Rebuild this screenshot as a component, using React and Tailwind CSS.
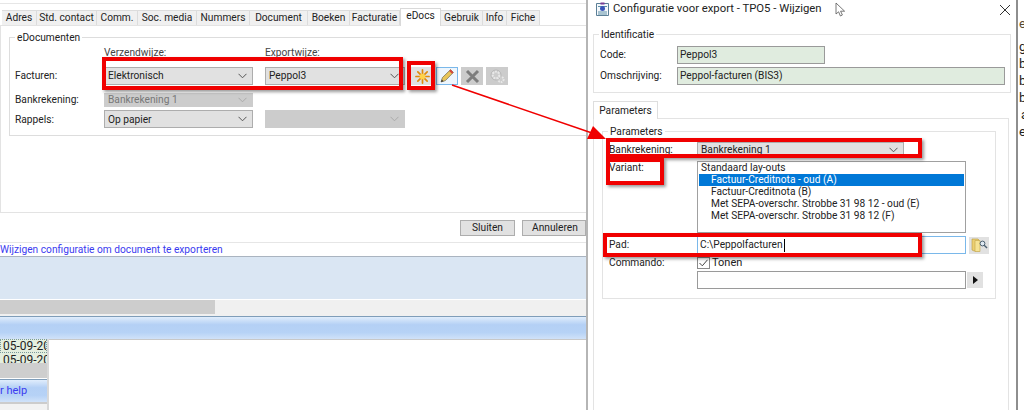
import React from "react";

const RED = "pointer-events-none absolute border-[4px] border-[#f00000] shadow-[2px_2px_3px_rgba(0,0,0,0.4)]";

function Chevron({ color = "#555" }) {
  return (
    <svg width="9" height="6" viewBox="0 0 9 6" className="shrink-0">
      <path d="M0.5 0.8 4.5 4.8 8.5 0.8" fill="none" stroke={color} strokeWidth="1" />
    </svg>
  );
}

function Select({ value, className = "", disabled = false }) {
  return (
    <div
      className={`flex items-center justify-between pl-[3px] pr-[5px] border ${
        disabled ? "bg-[#cccccc] border-[#cccccc] text-[#777]" : "bg-[#e1e1e1] border-[#adadad]"
      } ${className}`}
    >
      <span>{value}</span>
      <Chevron color={disabled ? "#aaa" : "#555"} />
    </div>
  );
}

function Tab({ label, w, active = false }) {
  return active ? (
    <div className="relative z-10 -mt-[2px] -mb-[1px] flex h-[18px] items-center justify-center border-x border-t border-[#d9d9d9] bg-white pb-[3px]" style={{ width: w }}>
      {label}
    </div>
  ) : (
    <div className="flex h-[15px] items-center justify-center border-r border-t border-[#dcdcdc] bg-[#f0f0f0]" style={{ width: w }}>
      {label}
    </div>
  );
}

function IconBtn({ children, className = "" }) {
  return <div className={`flex h-[18px] w-[22px] items-center justify-center ${className}`}>{children}</div>;
}

function Star() {
  return (
    <svg width="15" height="15" viewBox="0 0 16 16">
      <g stroke="#e08a0c" strokeWidth="1.8" strokeLinecap="round">
        <path d="M8 1v14M1 8h14M3 3l10 10M13 3 3 13" />
      </g>
      <circle cx="8" cy="8" r="3" fill="#ffd24a" />
    </svg>
  );
}

function Pencil() {
  return (
    <svg width="16" height="16" viewBox="0 0 16 16">
      <path d="M2 14 3.4 9.6 11.6 1.6 14.4 4.4 6.4 12.6Z" fill="#e9c65a" stroke="#6f6a55" strokeWidth="0.7" />
      <path d="M11.6 1.6 14.4 4.4 13 5.8 10.2 3Z" fill="#d9443a" />
      <path d="M2 14 2.8 11.4 4.6 13.2Z" fill="#333" />
    </svg>
  );
}

function GrayX() {
  return (
    <svg width="15" height="15" viewBox="0 0 15 15">
      <path d="M2 2 13 13M13 2 2 13" stroke="#7d7d7d" strokeWidth="3" />
    </svg>
  );
}

function Gears() {
  return (
    <svg width="17" height="15" viewBox="0 0 17 15">
      <circle cx="7" cy="6" r="3.5" fill="none" stroke="#e8e8e8" strokeWidth="2.4" strokeDasharray="2 1" />
      <circle cx="12" cy="10.5" r="2.6" fill="none" stroke="#e8e8e8" strokeWidth="2" strokeDasharray="1.6 1" />
      <circle cx="7" cy="6" r="5" fill="none" stroke="#a0a0a0" strokeWidth="0.5" />
    </svg>
  );
}

function Folder() {
  return (
    <svg width="17" height="16" viewBox="0 0 17 16">
      <path d="M1 2h6l1 1v11H3l-2-1Z" fill="#eccf72" stroke="#b89a3e" strokeWidth="0.6" />
      <path d="M4 3.5h5v11H4Z" fill="#f6e394" stroke="#c2a548" strokeWidth="0.6" />
      <circle cx="11.5" cy="6.5" r="2.4" fill="#dfe9f2" stroke="#4b5f70" strokeWidth="1" />
      <path d="M13.2 8.2 16 11" stroke="#4b5f70" strokeWidth="1.4" />
    </svg>
  );
}

function DocIcon() {
  return (
    <svg width="15" height="15" viewBox="0 0 15 15" className="shrink-0">
      <path d="M1.5 1.5h12v12h-12Z" fill="#f5f8fb" stroke="#5b7f97" />
      <path d="M3 4.5h9M3 10h9M3 12h9" stroke="#5d8fa6" />
      <circle cx="7.5" cy="6.5" r="2.5" fill="#3a55b8" />
      <path d="M5.5 1.5h4" stroke="#7a3c94" strokeWidth="2" />
    </svg>
  );
}

function Cursor() {
  return (
    <svg width="11" height="15" viewBox="0 0 11 15" className="shrink-0">
      <path d="M1 1v11l2.6-2.2L5.4 14l2-1-1.8-3.8H9.6Z" fill="#fff" stroke="#555" strokeWidth="0.8" />
    </svg>
  );
}

function LeftWindow() {
  return (
    <div className="flex w-[586px] shrink-0 flex-col overflow-hidden bg-white">
      <div className="h-[4px] shrink-0 border-b border-[#e6e6e6]" />
      <div className="h-[6px] shrink-0" />
      <div className="flex h-[15px] shrink-0 pl-[2px]">
        <Tab label="Adres" w={35} />
        <Tab label="Std. contact" w={60} />
        <Tab label="Comm." w={41} />
        <Tab label="Soc. media" w={59} />
        <Tab label="Nummers" w={53} />
        <Tab label="Document" w={58} />
        <Tab label="Boeken" w={42} />
        <Tab label="Facturatie" w={50} />
        <Tab label="eDocs" w={41} active />
        <Tab label="Gebruik" w={42} />
        <Tab label="Info" w={24} />
        <Tab label="Fiche" w={33} />
      </div>
      <div className="h-[188px] shrink-0 border-y border-l border-[#e3e3e3] pt-[11px] pl-[8px]">
        <div className="h-[99px] w-[600px] border border-[#dddddd]">
          <div className="-mt-[7px] ml-[5px] w-fit bg-white px-[2px] leading-[13px]">eDocumenten</div>
          <div className="ml-[94px] mt-[2px] flex h-[13px] leading-[13px] text-[#444]">
            <span className="w-[161px]">Verzendwijze:</span>
            <span>Exportwijze:</span>
          </div>
          <div className="mt-[8px] flex items-center pl-[5px]">
            <span className="w-[89px]">Facturen:</span>
            <Select value="Elektronisch" className="h-[18px] w-[149px]" />
            <Select value="Peppol3" className="ml-[12px] h-[18px] w-[140px]" />
            <div className="ml-[6px] flex gap-[3px]">
              <IconBtn className="w-[20px] bg-[#e1e1e1]"><Star /></IconBtn>
              <IconBtn className="w-[20px] border border-[#7ab8ea] bg-[#eef6fd]"><Pencil /></IconBtn>
              <IconBtn className="bg-[#cccccc]"><GrayX /></IconBtn>
              <IconBtn className="bg-[#cccccc]"><Gears /></IconBtn>
            </div>
          </div>
          <div className="mt-[7px] flex items-center pl-[5px]">
            <span className="w-[89px]">Bankrekening:</span>
            <Select value="Bankrekening 1" className="h-[14px] w-[149px]" disabled />
          </div>
          <div className="mt-[3px] flex items-center pl-[5px]">
            <span className="w-[89px]">Rappels:</span>
            <Select value="Op papier" className="h-[18px] w-[149px]" />
            <Select value="" className="ml-[12px] h-[18px] w-[140px]" disabled />
          </div>
        </div>
      </div>
      <div className="flex h-[29px] shrink-0 items-center gap-[7px] pl-[460px]">
        <div className="flex h-[16px] w-[64px] items-center justify-center border border-[#adadad] bg-[#e1e1e1]">Sluiten</div>
        <div className="flex h-[16px] w-[64px] shrink-0 items-center pl-[9px] border border-[#adadad] bg-[#e1e1e1]">Annuleren</div>
      </div>
      <div className="h-[14px] shrink-0 border-t border-[#e6e6e6] leading-[13px] text-[#3b3bf0]">Wijzigen configuratie om document te exporteren</div>
      <div className="h-[43px] shrink-0 border-t border-[#aab4c0] bg-[#dae6f3]" />
      <div className="flex h-[17px] shrink-0 border-t border-white bg-[#f0f0f0]">
        <div className="h-[14px] w-[215px] bg-[#cdcdcd]" />
      </div>
      <div className="h-[23px] shrink-0 border-t border-[#7f9db9] bg-[linear-gradient(#e0edfc,#b4d0f5_35%,#b6d2f6_70%,#d0e2f9)] shadow-[0_1px_0_#c8c8c8]" />
      <div className="flex flex-1 flex-col w-[49px] border-r-2 border-[#d8d8d8]">
        <div className="flex h-[14px] items-center overflow-hidden border border-dotted border-[#7a9a9a] bg-[#e4efdf] text-[12px] whitespace-nowrap pl-[2px]">05-09-20</div>
        <div className="flex h-[10px] items-start overflow-hidden bg-[#e4efdf] pl-[3px] text-[12px] leading-[14px] whitespace-nowrap">05-09-20</div>
        <div className="h-[15px] bg-[#cecece]" />
        <div className="mt-[1px] flex h-[23px] items-center border-t border-[#7f9db9] bg-[linear-gradient(#e0edfc,#b4d0f5_35%,#b6d2f6_70%,#d0e2f9)] text-[11px] text-[#3b3bf0]">r help</div>
        <div className="flex-1 border-t-2 border-[#cccccc] bg-[#f2f2f2]" />
      </div>
    </div>
  );
}

function Group({ title, className = "", children }) {
  return (
    <div className={`border border-[#e3e3e3] ${className}`}>
      <div className="-mt-[7px] ml-[5px] w-fit bg-white px-[2px] leading-[13px]">{title}</div>
      {children}
    </div>
  );
}

function RightWindow() {
  return (
    <div className="relative flex w-[432px] shrink-0 flex-col border-x-2 border-x-[#b5b5b5] bg-white pl-[5px] border-r-[#8e8e8e]">
      <div className="-ml-[5px] flex h-[18px] shrink-0 items-center pl-[7px] pt-[1px] whitespace-nowrap">
        <DocIcon />
        <span className="ml-[3px] w-[213px] text-[11.3px]">Configuratie voor export - TPO5 - Wijzigen</span>
        <span className="ml-[9px]"><Cursor /></span>
        <svg width="12" height="10" viewBox="0 0 12 10" className="ml-[153px] shrink-0">
          <path d="M1 0 11 10M11 0 1 10" stroke="#333" strokeWidth="1" />
        </svg>
      </div>
      <div className="h-[16px] shrink-0" />
      <Group title="Identificatie" className="h-[59px] w-[418px] shrink-0">
        <div className="mt-[5px] flex items-center pl-[6px]">
          <span className="w-[77px]">Code:</span>
          <div className="flex h-[18px] w-[148px] items-center border border-[#9a9a9a] bg-[#e0ecdf] pl-[2px]">Peppol3</div>
        </div>
        <div className="mt-[3px] flex items-center pl-[6px]">
          <span className="w-[77px]">Omschrijving:</span>
          <div className="flex h-[18px] w-[328px] items-center border border-[#9a9a9a] bg-[#e0ecdf] pl-[2px]">Peppol-facturen (BIS3)</div>
        </div>
      </Group>
      <div className="h-[8px] shrink-0" />
      <div className="relative z-10 -mb-[1px] flex h-[18px] w-[65px] shrink-0 items-center justify-center border-x border-t border-[#dedede] bg-white">
        Parameters
      </div>
      <div className="flex-1 w-[416px] border-x border-t border-[#e3e3e3] pt-[12px] pl-[8px]">
        <Group title="Parameters" className="h-[168px] w-[394px]">
          <div className="mt-[4px] flex items-center pl-[6px]">
            <span className="w-[88px]">Bankrekening:</span>
            <Select value="Bankrekening 1" className="h-[16px] w-[207px]" />
          </div>
          <div className="mt-[3px] flex items-start pl-[6px]">
            <span className="w-[88px] leading-[13px]">Variant:</span>
            <div className="h-[72px] w-[269px] border border-[#a0a0a0] px-[1px] leading-[12px]">
              <div className="pl-[2px]">Standaard lay-outs</div>
              <div className="bg-[#0078d7] pl-[12px] text-white">Factuur-Creditnota - oud (A)</div>
              <div className="pl-[12px]">Factuur-Creditnota (B)</div>
              <div className="pl-[12px]">Met SEPA-overschr. Strobbe 31 98 12 - oud (E)</div>
              <div className="pl-[12px]">Met SEPA-overschr. Strobbe 31 98 12 (F)</div>
            </div>
          </div>
          <div className="mt-[3px] flex items-center pl-[6px]">
            <span className="w-[88px]">Pad:</span>
            <div className="flex h-[18px] w-[269px] items-center border border-[#7ab8ea] pl-[2px]">C:\Peppolfacturen<span className="ml-[1px] h-[13px] w-px bg-black" /></div>
            <div className="ml-[3px] flex h-[17px] w-[20px] items-center justify-center bg-[#e1e1e1]"><Folder /></div>
          </div>
          <div className="mt-[3px] flex h-[12px] items-center pl-[6px]">
            <span className="w-[88px]">Commando:</span>
            <div className="flex h-[12px] w-[13px] items-center justify-center border border-[#8a8a8a]">
              <svg width="9" height="8" viewBox="0 0 9 8"><path d="M0.5 4 3.3 6.8 8.5 0.8" fill="none" stroke="#444" strokeWidth="1" /></svg>
            </div>
            <span className="ml-[2px] text-[11px]">Tonen</span>
          </div>
          <div className="mt-[2px] flex items-center pl-[94px]">
            <div className="h-[18px] w-[269px] border border-[#9a9a9a]" />
            <div className="ml-[1px] flex h-[16px] w-[16px] items-center justify-center bg-[#e1e1e1]">
              <svg width="5" height="8" viewBox="0 0 5 8"><path d="M0 0 5 4 0 8Z" fill="#111" /></svg>
            </div>
          </div>
        </Group>
      </div>
    </div>
  );
}

function EdgeText() {
  return (
    <div className="flex flex-1 flex-col overflow-hidden bg-white pt-[15px] pl-[1px] text-[13px] leading-[17px] text-[#222]">
      <span className="mb-[6px] text-[#5a4a30]">e</span>
      {["g", "b", "b", "b", "a", "e"].map((c, i) => (
        <span key={i} className={c === "a" ? "pl-[2px]" : ""}>{c}</span>
      ))}
    </div>
  );
}

export default function App() {
  return (
    <div className="relative flex h-[410px] w-[1024px] overflow-hidden bg-white font-['Roboto',sans-serif] text-[10.2px] text-[#222]">
      <LeftWindow />
      <RightWindow />
      <EdgeText />
      <div className={`${RED} left-[102px] top-[57px] h-[33px] w-[301px]`} />
      <div className={`${RED} left-[407px] top-[61px] h-[29px] w-[28px]`} />
      <div className={`${RED} left-[606px] top-[138px] h-[20px] w-[316px] border-[3px]`} />
      <div className={`${RED} left-[606px] top-[158px] h-[27px] w-[58px] border-[3px]`} />
      <div className={`${RED} left-[603px] top-[233px] h-[24px] w-[319px] border-[3px]`} />
      <svg className="pointer-events-none absolute left-0 top-0" width="1024" height="410">
        <path d="M452 85 592 133" stroke="#f00000" strokeWidth="1.5" fill="none" />
        <path d="M606 139 587 139 593 126Z" fill="#f00000" />
      </svg>
    </div>
  );
}
